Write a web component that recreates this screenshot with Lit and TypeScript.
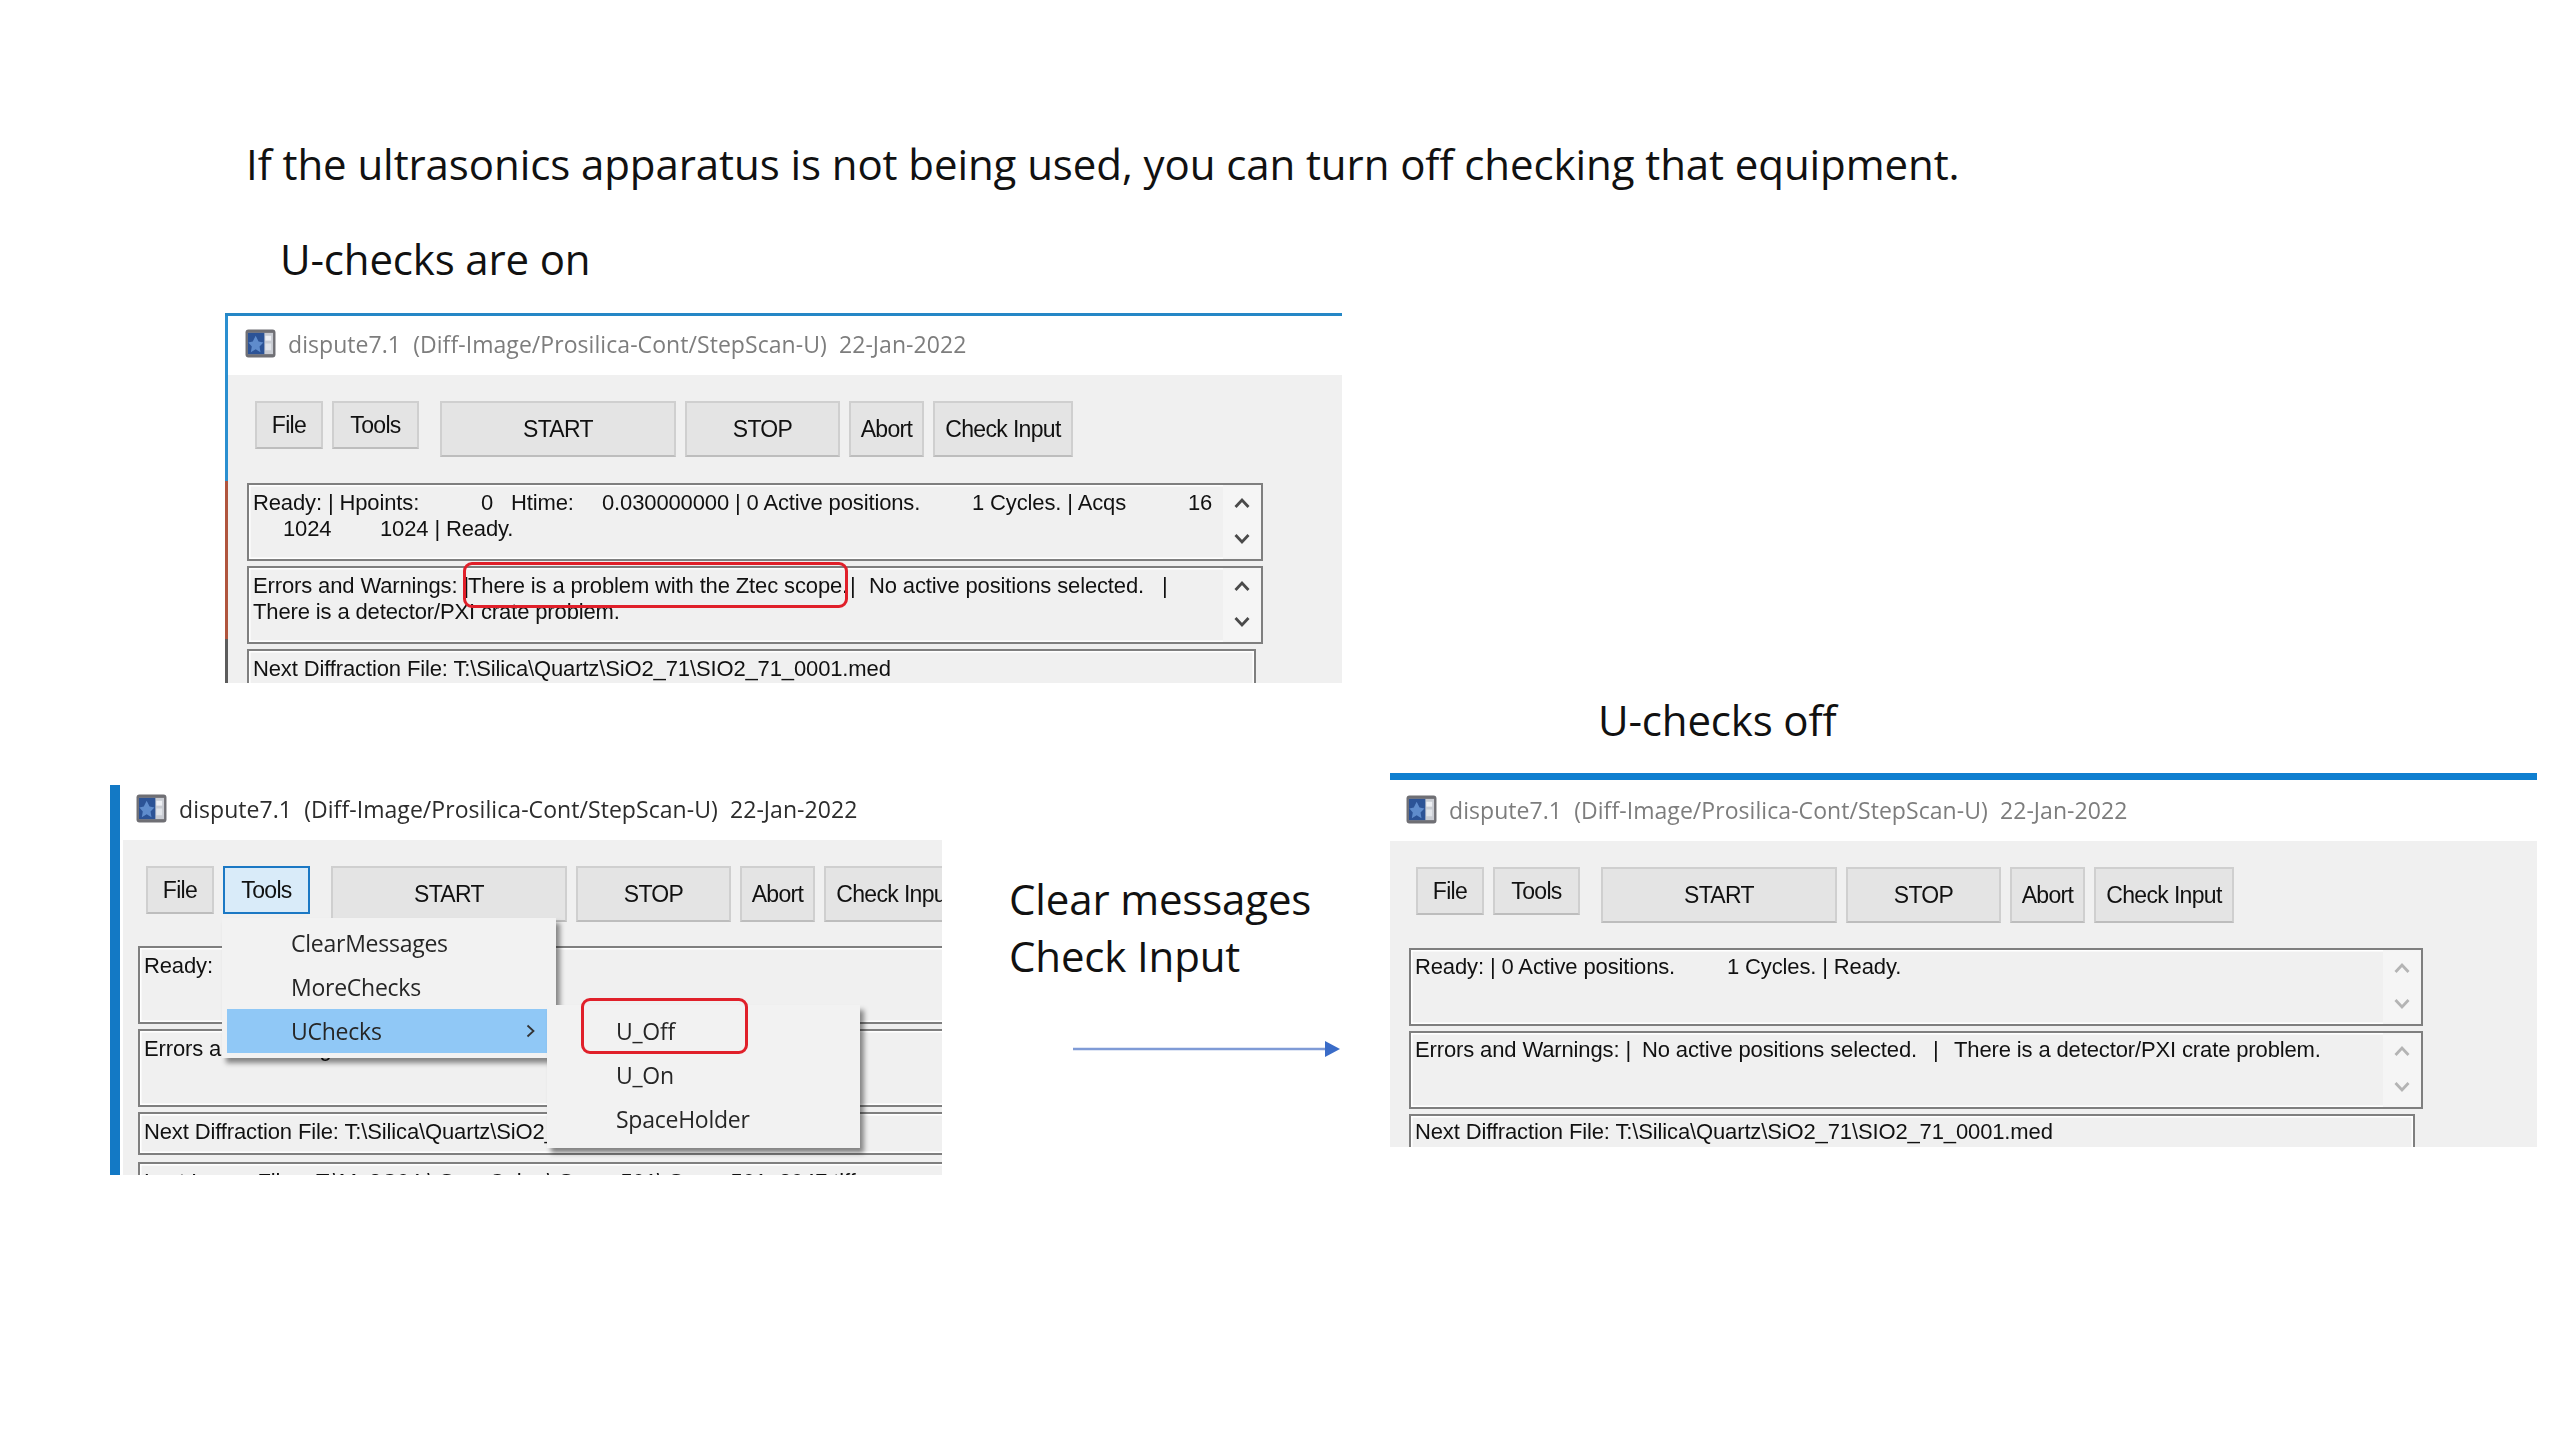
import { LitElement, html, css, svg } from "lit";
import { customElement } from "lit/decorators.js";

type Seg = [number, string];

const icon = html`<svg class="icon" viewBox="0 0 32 30">
  <rect x="0.5" y="0.5" width="31" height="29" rx="3" fill="#6f6f74"/>
  <rect x="3" y="4" width="26" height="22" fill="#c9ccd3"/>
  <rect x="3" y="4" width="17" height="22" fill="#2c5396"/>
  <path d="M11 7 L14 13 L19 14 L15 18 L16 24 L11 21 L6 24 L7 18 L3.5 14 L8 13 Z" fill="#5f8ccc"/>
  <rect x="21" y="7" width="6" height="5" fill="#eef0f4"/>
  <rect x="21" y="15" width="6" height="7" fill="#e2e5ea"/>
</svg>`;

const chevUp = svg`<path d="M1.5 10 L8 3 L14.5 10" fill="none" stroke="currentColor" stroke-width="2.8"/>`;
const chevDown = svg`<path d="M1.5 2 L8 9 L14.5 2" fill="none" stroke="currentColor" stroke-width="2.8"/>`;

@customElement("dispute-window")
class DisputeWindow extends LitElement {
  static properties = {
    variant: { type: String },
    boxes: { attribute: false },
  };
  declare variant: string;
  declare boxes: { lines: Seg[][]; short?: boolean; scroll?: boolean }[];

  static styles = css`
    :host { display: block; height: 100%; font-family: "Liberation Sans", Arial, sans-serif; color: #111; }
    .root { height: 100%; }
    .win { display: flex; flex-direction: column; height: 100%; overflow: hidden; background: #fff; }
    .title { box-sizing: border-box; display: flex; align-items: center; flex: none; font-family: "Open Sans", sans-serif; font-size: 23px; letter-spacing: 0.06px; white-space: pre; color: #7d7d7d; }
    .icon { width: 31px; height: 29px; flex: none; margin-right: 12px; }
    .body { flex: 1; background: #f0f0f0; min-height: 0; }
    .toolbar { display: flex; align-items: flex-start; box-sizing: border-box; }
    .btn { box-sizing: border-box; display: flex; align-items: center; justify-content: center; height: 56px; flex: none; background: #e4e4e4; border: 2px solid #cfcfcf; border-bottom-color: #bdbdbd; font-size: 23px; letter-spacing: -0.67px; white-space: nowrap; overflow: hidden; }
    .btn.sm { height: 48px; }
    .btn.active { background: #d9ebf9; border-color: #1b78c4; }
    .box { box-sizing: border-box; position: relative; height: 78px; flex: none; border: 2px solid #7f7f7f; box-shadow: inset 0 0 0 1.5px #fff; padding: 5px 0 0 4px; font-size: 22px; letter-spacing: -0.13px; line-height: 26px; overflow: hidden; }
    .box.short { height: 42px; border-bottom: 0; }
    .line { display: flex; height: 26px; }
    .seg { flex: none; white-space: pre; }
    .boxes { display: flex; flex-direction: column; gap: 5px; box-sizing: border-box; }
    .scroll { position: absolute; top: 0; bottom: 0; right: 0; width: 38px; display: flex; flex-direction: column; justify-content: space-around; align-items: center; color: #4a4a4a; padding: 0 0 2px; box-sizing: border-box; background: #f5f5f5; }
    .scroll svg { width: 16px; height: 12px; display: block; }

    .top-a .win { border-top: 3px solid #2587c6; box-sizing: border-box; position: relative; }
    .top-a .stripe { position: absolute; left: 0; top: 0; bottom: 0; width: 3px; background: linear-gradient(#2a8fd0 0 45%, #b0553e 45% 88%, #5c5c5c 88%); }
    .top-a .title { height: 59px; padding: 0 0 4px 20px; }
    .top-a .body { margin-left: 3px; }
    .top-a .toolbar { padding: 26px 0 0 27px; height: 108px; }
    .top-a .boxes { padding-left: 19px; width: 1035px; }
    .top-a .box.short { width: 1009px; }

    .top-b .win { flex-direction: row; }
    .top-b .bar { width: 10px; flex: none; background: #1379c5; margin-right: 3px; }
    .top-b .col { flex: 1; min-width: 0; display: flex; flex-direction: column; }
    .top-b .title { height: 55px; color: #2c2c2c; padding: 0 0 8px 13px; }
    .top-b .toolbar { padding: 26px 0 0 23px; height: 106px; }
    .top-b .boxes { padding-left: 15px; width: 900px; }
    .top-b .box.short { height: 43px; border-bottom: 2px solid #7f7f7f; }
    .top-b .box.short + .box.short { margin-top: 2px; }

    .top-c .win { border-top: 7px solid #0f7fd0; box-sizing: border-box; }
    .top-c .title { height: 61px; padding: 0 0 2px 16px; }
    .top-c .toolbar { padding: 26px 0 0 26px; height: 107px; }
    .top-c .boxes { padding-left: 19px; width: 1033px; }
    .top-c .box { padding-top: 4px; }
    .top-c .box.short { width: 1006px; padding-top: 3px; }
    .top-c .scroll { color: #b4b4b4; }
  `;

  render() {
    const v = this.variant;
    const btns: [string, number, boolean, boolean, number][] = [
      ["File", 68, true, false, 9],
      ["Tools", 87, true, v === "b", 21],
      ["START", 236, false, false, 9],
      ["STOP", 155, false, false, 9],
      ["Abort", 75, false, false, 9],
      ["Check Input", 140, false, false, 0],
    ];
    const head = html`<div class="title">${icon}<span>dispute7.1  (Diff-Image/Prosilica-Cont/StepScan-U)  22-Jan-2022</span></div>`;
    const content = html`<div class="body">
      <div class="toolbar">
        ${btns.map(([t, w, sm, act, gap]) => html`<div class="btn ${sm ? "sm" : ""} ${act ? "active" : ""}" style="width:${w}px;margin-right:${gap}px">${t}</div>`)}
      </div>
      <div class="boxes">
        ${this.boxes.map((b) => html`<div class="box ${b.short ? "short" : ""}">
          ${b.lines.map((segs) => html`<div class="line">${segs.map(([x, t], i) => {
            const next = segs[i + 1];
            return html`<span class="seg" style="width:${next ? next[0] - x : 900}px;${i === 0 ? `margin-left:${x}px` : ""}">${t}</span>`;
          })}</div>`)}
          ${b.scroll ? html`<div class="scroll"><svg viewBox="0 0 16 12">${chevUp}</svg><svg viewBox="0 0 16 12">${chevDown}</svg></div>` : ""}
        </div>`)}
      </div>
    </div>`;
    return html`<div class="root top-${v}">
      ${v === "b"
        ? html`<div class="win"><div class="bar"></div><div class="col">${head}${content}</div></div>`
        : html`<div class="win">${v === "a" ? html`<div class="stripe"></div>` : ""}${head}${content}</div>`}
    </div>`;
  }
}

const NEXT = "Next Diffraction File: T:\\Silica\\Quartz\\SiO2_71\\SIO2_71_0001.med";
const BOXES_A = [
  { scroll: true, lines: [
    [[0, "Ready: | Hpoints:"], [228, "0"], [258, "Htime:"], [349, "0.030000000 | 0 Active positions."], [719, "1 Cycles. | Acqs"], [935, "16"]],
    [[30, "1024"], [127, "1024 | Ready."]],
  ] as Seg[][] },
  { scroll: true, lines: [
    [[0, "Errors and Warnings: |"], [215, "There is a problem with the Ztec scope."], [597, "|"], [616, "No active positions selected."], [909, "|"]],
    [[0, "There is a detector/PXI crate problem."]],
  ] as Seg[][] },
  { short: true, lines: [[[0, NEXT]]] as Seg[][] },
];
const BOXES_B = [
  { lines: [[[0, "Ready:"]]] as Seg[][] },
  { lines: [[[0, "Errors and Warnings:"]]] as Seg[][] },
  { short: true, lines: [[[0, NEXT]]] as Seg[][] },
  { short: true, lines: [[[0, "Last Image File:   T:\\M_2C04 \\ ScanCube \\ Scan_501\\ Scan_501_2047.tiff"]]] as Seg[][] },
];
const BOXES_C = [
  { scroll: true, lines: [[[0, "Ready: | 0 Active positions."], [312, "1 Cycles. | Ready."]]] as Seg[][] },
  { scroll: true, lines: [[[0, "Errors and Warnings: |"], [227, "No active positions selected."], [518, "|"], [539, "There is a detector/PXI crate problem."]]] as Seg[][] },
  { short: true, lines: [[[0, NEXT]]] as Seg[][] },
];

@customElement("app-root")
export class AppRoot extends LitElement {
  static styles = css`
    :host { display: block; width: 2560px; height: 1440px; background: #fff; position: relative; overflow: hidden; font-family: "Open Sans", sans-serif; color: #111; }
    .cap { position: absolute; white-space: pre; font-size: 42px; line-height: 50px; letter-spacing: -0.15px; }
    .main { left: 246px; top: 139px; letter-spacing: -0.08px; }
    .on { left: 280px; top: 234px; }
    .off { left: 1598px; top: 695px; }
    .clear { left: 1009px; top: 870px; line-height: 57px; }
    .winpos { position: absolute; filter: blur(0.55px); }
    .a { left: 225px; top: 313px; width: 1117px; height: 370px; }
    .b { left: 110px; top: 785px; width: 832px; height: 390px; }
    .c { left: 1390px; top: 773px; width: 1147px; height: 374px; }
    .red { position: absolute; box-sizing: border-box; border: 3px solid #e0202a; border-radius: 9px; }
    .red1 { left: 463px; top: 562px; width: 385px; height: 46px; }
    .red2 { left: 581px; top: 998px; width: 167px; height: 56px; }
    .menu { position: absolute; box-sizing: border-box; background: #f2f2f2; box-shadow: 4px 5px 5px rgba(0,0,0,.45); font-size: 23px; letter-spacing: -0.25px; color: #262626; filter: blur(0.5px); display: flex; flex-direction: column; }
    .m1 { left: 222px; top: 918px; width: 334px; height: 140px; padding: 3px 9px 4px 5px; }
    .m2 { left: 547px; top: 1005px; width: 313px; height: 143px; padding: 4px 0; }
    .item { height: 44px; display: flex; align-items: center; padding-left: 64px; position: relative; flex: none; }
    .m2 .item { padding-left: 69px; }
    .item.hl { background: #90c8f6; }
    .chev { position: absolute; right: 12px; top: 15px; width: 9px; height: 14px; }
    .arrow { position: absolute; left: 1073px; top: 1039px; width: 270px; height: 20px; }
  `;

  render() {
    return html`
      <div class="cap main">If the ultrasonics apparatus is not being used, you can turn off checking that equipment.</div>
      <div class="cap on">U-checks are on</div>
      <div class="cap off">U-checks off</div>
      <div class="cap clear">Clear messages
Check Input</div>

      <div class="winpos a"><dispute-window variant="a" .boxes=${BOXES_A}></dispute-window></div>
      <div class="red red1"></div>

      <div class="winpos b"><dispute-window variant="b" .boxes=${BOXES_B}></dispute-window></div>
      <div class="menu m1">
        <div class="item">ClearMessages</div>
        <div class="item">MoreChecks</div>
        <div class="item hl">UChecks
          <svg class="chev" viewBox="0 0 9 14"><path d="M1.5 1.5 L7.5 7 L1.5 12.5" fill="none" stroke="#333" stroke-width="1.8"/></svg>
        </div>
      </div>
      <div class="menu m2">
        <div class="item">U_Off</div>
        <div class="item">U_On</div>
        <div class="item">SpaceHolder</div>
      </div>
      <div class="red red2"></div>

      <svg class="arrow" viewBox="0 0 270 20">
        <path d="M0 10 H254" stroke="#7f9bd6" stroke-width="2.5"/>
        <path d="M252 2 L267 10 L252 18 Z" fill="#3a6cc8"/>
      </svg>

      <div class="winpos c"><dispute-window variant="c" .boxes=${BOXES_C}></dispute-window></div>
    `;
  }
}
